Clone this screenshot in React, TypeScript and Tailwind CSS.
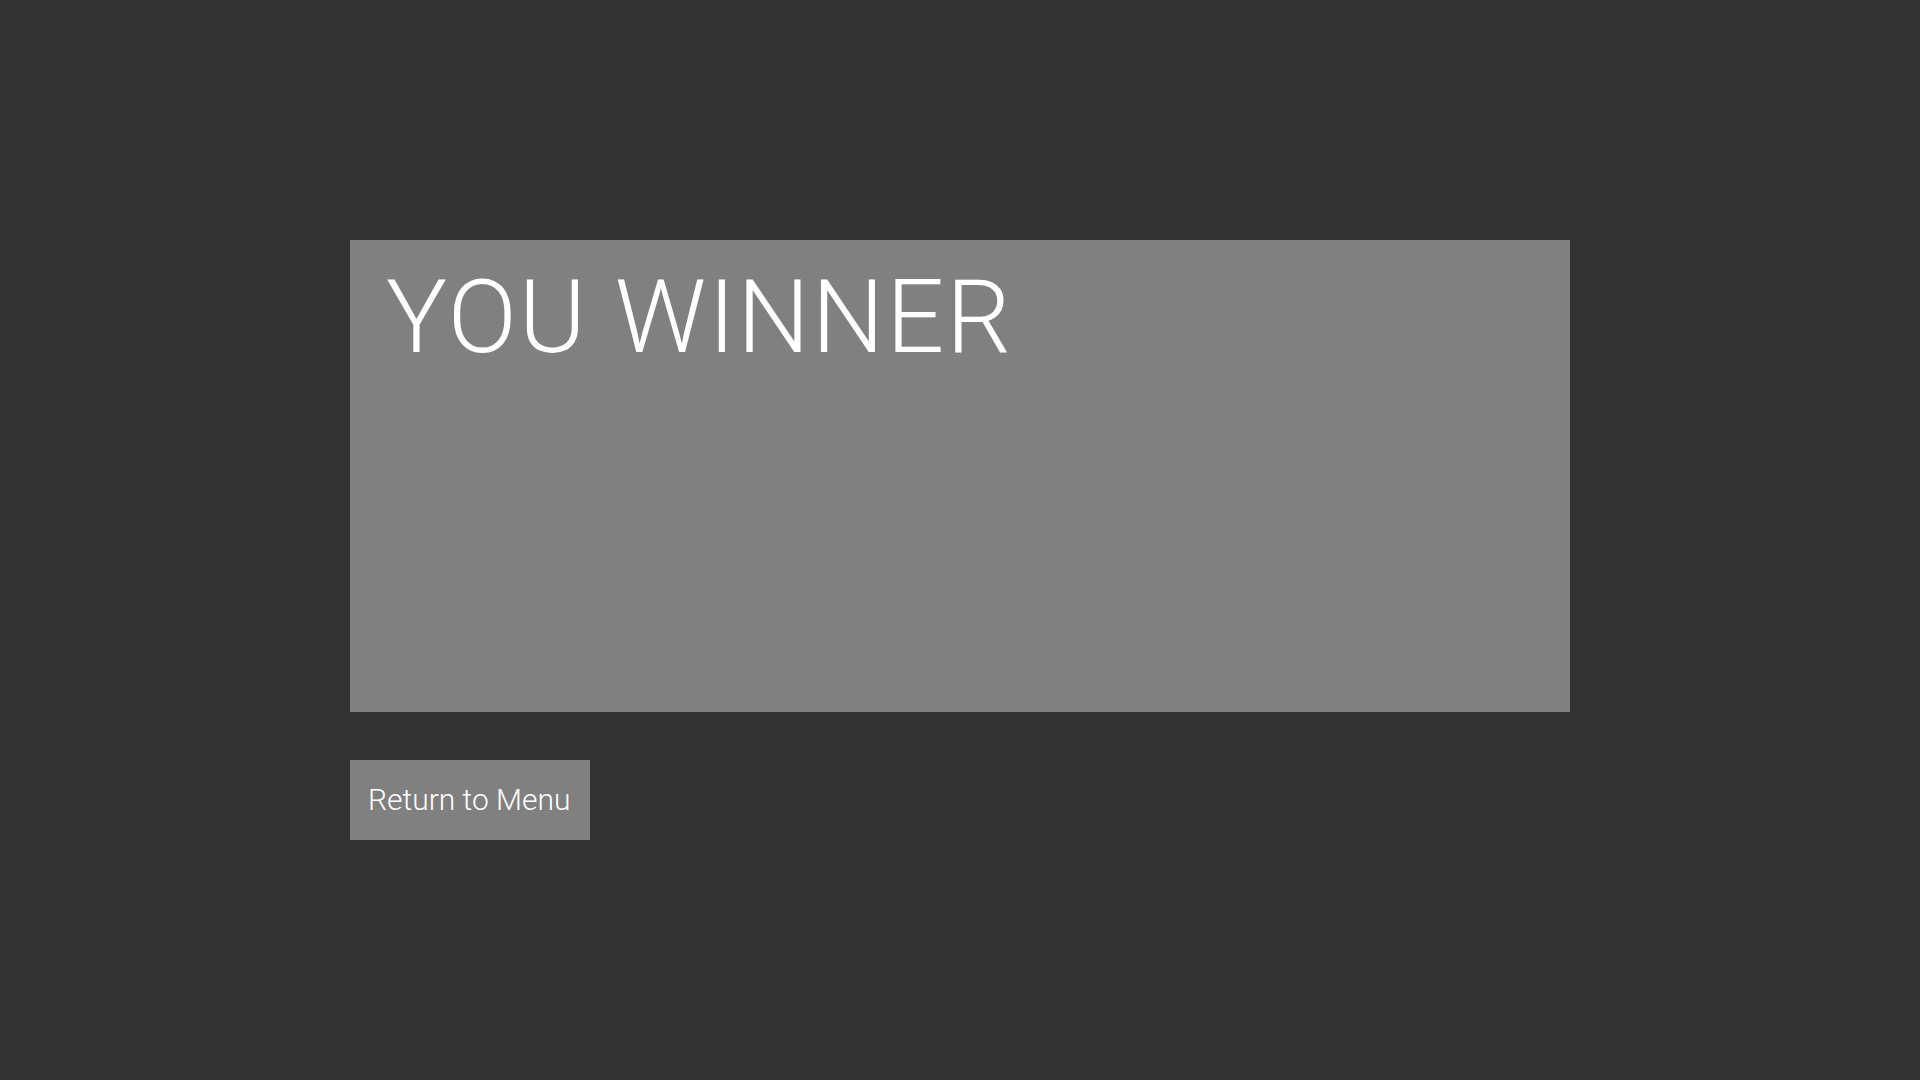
export default function App() {
  return (
    <div className="min-h-screen w-full bg-[#333333] font-['Roboto',sans-serif] text-white">
      <div className="flex flex-col items-start gap-12 pl-[350px] pt-[240px]">
        <div className="h-[472px] w-[1220px] bg-[#808080] pl-[36px] pt-[26px]">
          <h1 className="text-[102px] leading-none font-light tracking-[2px]">YOU WINNER</h1>
        </div>
        <button className="flex h-[80px] w-[240px] items-center bg-[#808080] pl-[18px] text-[30px] leading-none font-light text-white">
          Return to Menu
        </button>
      </div>
    </div>
  );
}
